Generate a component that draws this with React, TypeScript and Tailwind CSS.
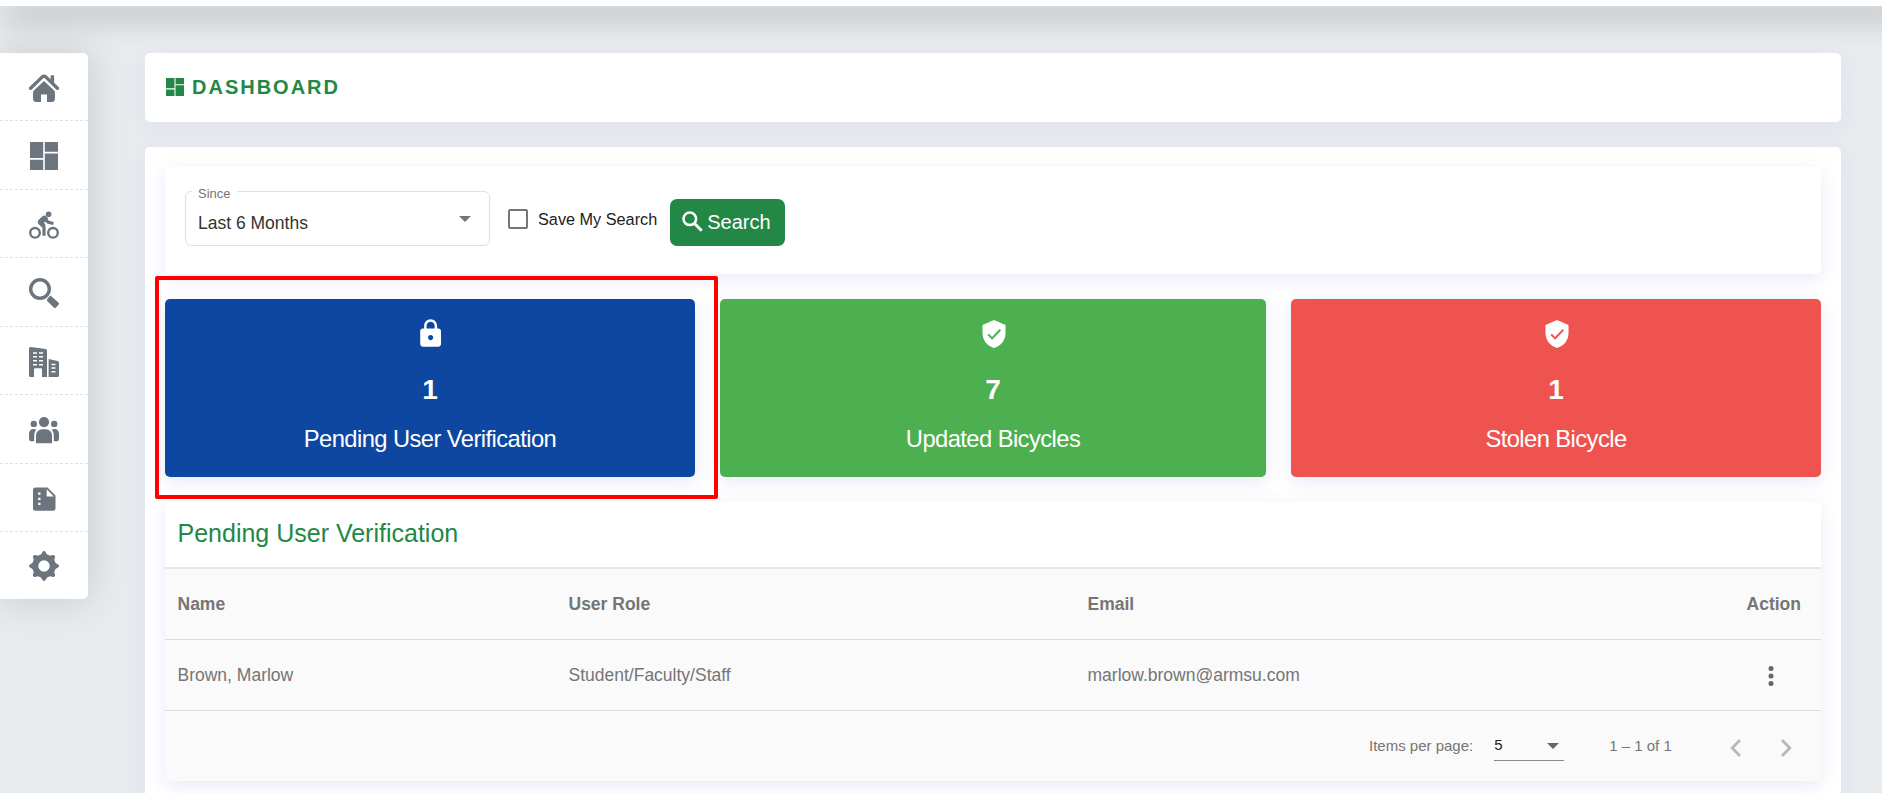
import React from "react";
import { MdLock } from "react-icons/md";

const iconBox = "h-[30px] w-[30px]";

const Home = () => (
  <svg viewBox="0 0 30 30" className={iconBox} fill="currentColor">
    <path d="M21.6 8V3.2c0-.6.4-1 1-1h1.500c.6 0 1 .4 1 1v8z" />
    <path d="M1.600 15.300 13 4.100c1.200-1.100 2.800-1.100 4 0l11.400 11.200" fill="none" stroke="currentColor" strokeWidth="3.300" strokeLinecap="round" />
    <path d="M15 8 25.900 18.200V26a3 3 0 0 1-3 3H18v-7.500h-6V29H7.100a3 3 0 0 1-3-3v-7.800z" />
  </svg>
);
const Dash = ({ className }: { className: string }) => (
  <svg viewBox="0 0 28 28" className={className} fill="currentColor">
    <path d="M0 0h13.200v16H0zM14.800 0H28v9.700H14.800zM0 17.800h13.200V28H0zM14.800 11.400H28V28H14.800z" />
  </svg>
);
const Biker = () => (
  <svg viewBox="0 0 30 30" className={iconBox} fill="currentColor">
    <circle cx="19.600" cy="4.200" r="2.800" />
    <circle cx="6" cy="22.800" r="4.800" fill="none" stroke="currentColor" strokeWidth="2.400" />
    <circle cx="24" cy="22.800" r="4.800" fill="none" stroke="currentColor" strokeWidth="2.400" />
    <path d="m15.500 8.800 3.800 3.400 5.200 1.300M10.800 12.600l4.200 4.600v8.600" fill="none" stroke="currentColor" strokeWidth="3.200" strokeLinejoin="round" />
    <path d="M9 13.400c-.6-1.500-.1-2.800 1-3.800l3.600-3.300c1.300-1 2.700-1 3.700.1l2 2.200-4.300 4 1.700 2.800-3.700 1.500z" />
  </svg>
);
const Search = () => (
  <svg viewBox="0 0 30 30" className={iconBox} fill="currentColor">
    <circle cx="11" cy="11" r="9.300" fill="none" stroke="currentColor" strokeWidth="3.400" />
    <path d="m22.300 18.200 7 6.200c.9.800.9 1.600.2 2.400l-2.200 2.500c-.8.800-1.700.8-2.500.1l-6.400-6.200c-.7-.7-.7-1.600 0-2.300l1.900-2.400c.6-.8 1.300-.8 2-.3z" />
  </svg>
);
const Building = () => (
  <svg viewBox="0 0 30 30" className={iconBox} fill="currentColor" fillRule="evenodd">
    <path d="M0 1.500C0 .6.8-.1 1.800 0L16.500 2.100c.9.1 1.500.8 1.500 1.600V30h-5v-7.500c0-.8-.5-1.300-1.300-1.300H6.300c-.8 0-1.300.5-1.300 1.300V30H1.500C.7 30 0 29.400 0 28.500zM4 5.200v1.600h4V5.200zm6 0v1.600h4V5.200zM4 9v1.600h4V9zm6 0v1.600h4V9zM4 13v1.600h4V13zm6 0v1.600h4V13zM4 17v1.600h4V17zm6 0v1.600h4V17z" />
    <path d="M19.600 12 28.500 14c.9.2 1.500.8 1.500 1.700V28.500c0 .9-.7 1.500-1.500 1.500h-8.900zm2.900 4.800v1.500h4v-1.500zm0 3.500v1.500h4v-1.500zm0 3.700v1.500h4V24z" />
  </svg>
);
const People = () => (
  <svg viewBox="0 0 30 30" className={iconBox} fill="currentColor">
    <circle cx="15" cy="7.100" r="5.100" />
    <circle cx="4.800" cy="8.900" r="3.200" />
    <circle cx="25.200" cy="8.900" r="3.200" />
    <path d="M7 28.200V20.500a6.200 6.200 0 0 1 6.200-6.200h3.600a6.200 6.200 0 0 1 6.200 6.200v7.700zM0 24.300V18.800c0-2.700 2-4.700 4.600-4.700 1 0 1.900.2 2.700.6-1.400 1.500-2.100 3.300-2.100 5.500v6.100H2a2 2 0 0 1-2-2zM30 24.300V18.800c0-2.700-2-4.700-4.600-4.700-1 0-1.900.2-2.700.6 1.400 1.500 2.100 3.300 2.100 5.500v6.100H28a2 2 0 0 0 2-2z" />
  </svg>
);
const Doc = () => (
  <svg viewBox="0 0 30 30" className={iconBox} fill="currentColor" fillRule="evenodd">
    <path d="M6.500 3.500H18.500l8 8v12.800a2.500 2.500 0 0 1-2.500 2.500H6.500A2.500 2.500 0 0 1 4 24.300V6a2.500 2.500 0 0 1 2.500-2.500zM17.700 5.300V12.500h7.200zM9.200 8.500v2.300h2.300V8.500zm0 5.200V16h2.300v-2.300zm0 5v2.300h2.300v-2.300z" />
  </svg>
);
const Gear = () => (
  <svg viewBox="0 0 30 30" className={iconBox} fill="none">
    <circle cx="15" cy="15" r="8.700" stroke="currentColor" strokeWidth="6" />
    {[0, 45, 90, 135, 180, 225, 270, 315].map((a) => (
      <path key={a} transform={`rotate(${a} 15 15)`} d="M9.800 4.800C12 4 12.600 2.800 13.300 1.200c.6-1.500 2.800-1.500 3.400 0 .7 1.600 1.300 2.800 3.500 3.600z" fill="currentColor" />
    ))}
  </svg>
);
const Shield = () => (
  <svg viewBox="0 0 24 28" className="mt-[1.500px] mb-[1.750px] h-7 w-6" fill="none">
    <path d="M12 0 23.500 5v8c0 7-4.500 13-11.500 15C5 26 .5 20 .5 13V5z" fill="currentColor" />
    <path d="m6.200 14.400 3.900 4 8.200-8.600" className="stroke-(--mark)" strokeWidth="2" />
  </svg>
);

const nav = [
  <Home />,
  <Dash className="mb-[2px] h-7 w-7" />,
  <Biker />,
  <Search />,
  <Building />,
  <People />,
  <Doc />,
  <Gear />,
];

const cardShadow = "shadow-[0_5px_18px_rgba(82,63,205,0.12)]";

const stats = [
  { icon: <MdLock />, n: 1, label: "Pending User Verification", color: "bg-[#0d47a1]" },
  { icon: <Shield />, n: 7, label: "Updated Bicycles", color: "bg-[#4caf50] [--mark:#4caf50]" },
  { icon: <Shield />, n: 1, label: "Stolen Bicycle", color: "bg-[#ef5350] [--mark:#ef5350]" },
];

const cols = "grid grid-cols-[391px_519px_1fr_auto] items-center pl-[12.500px] pr-5";

export default function App() {
  return (
    <div className="relative h-[793px] overflow-hidden bg-[#e7ebee] font-['Liberation_Sans',Arial,sans-serif]">
      <header className="relative h-[6px] bg-white shadow-[12px_10px_25px_8px_rgba(0,0,0,0.14)]" />
      <div className="flex items-start pt-[47px]">
        <nav className="relative h-[546px] w-[88px] shrink-0 rounded-r-[5px] bg-white text-[#6c757d] shadow-[0_0_38px_rgba(0,0,0,0.15)]">
          {nav.map((icon, i) => (
            <a key={i} className="flex h-[68.430px] items-center justify-center border-b border-dashed border-[#dee2e6] pt-[3px] last:border-0 last:pt-0">
              {icon}
            </a>
          ))}
        </nav>
        <main className="ml-[57px] flex w-[1696px] flex-col gap-[25px]">
          <section className="flex h-[69px] items-center gap-[8px] rounded-[5px] bg-white pb-[2px] pl-[21px] text-[#238745] shadow-[0_5px_18px_rgba(82,63,255,0.05)]">
            <Dash className="h-[18px] w-[18px]" />
            <h1 className="text-[20px] font-bold tracking-[2px]">DASHBOARD</h1>
          </section>
          <section className="h-[700px] rounded-[5px] bg-white p-5 shadow-[0_5px_18px_rgba(82,63,255,0.05)]">
            <div className={`flex h-[107px] rounded-[5px] bg-white pl-5 pt-6 ${cardShadow}`}>
              <div className="relative flex h-[55px] w-[305px] items-center justify-between rounded-[6px] border border-[#e0e0e0] pl-3 pr-[18px]">
                <span className="absolute left-[6px] top-[-6px] bg-white px-[6px] text-[13px] leading-[16px] text-[#757575]">Since</span>
                <span className="pt-[8px] text-[17.500px] leading-5 text-[#333]">Last 6 Months</span>
                <span className="border-x-[6px] border-t-[6px] border-x-transparent border-t-[#757575]" />
              </div>
              <label className="ml-[18px] mt-[17px] flex h-[22px] items-center gap-[10px] text-[16.250px] text-[#212121]">
                <span className="h-5 w-5 rounded-[2px] border-[2.500px] border-[#757575]" />
                Save My Search
              </label>
              <button className="ml-[13px] mt-2 flex h-[47px] w-[115px] items-center gap-[4px] rounded-[7px] bg-[#238745] pb-[2px] pl-3 text-[20px] text-white">
                <svg viewBox="0 0 21 21" className="h-[21px] w-[21px]" fill="none" stroke="currentColor">
                  <circle cx="7.800" cy="7.800" r="6.300" strokeWidth="2.500" />
                  <path d="m12.300 12.300 7.400 7.400" strokeWidth="3" />
                </svg>
                Search
              </button>
            </div>
            <div className="relative mt-[25px] grid grid-cols-[530px_546px_530px] gap-[25px]">
              {stats.map((s) => (
                <div key={s.label} className={`flex h-[178px] flex-col items-center rounded-[5px] text-white ${s.color} ${cardShadow}`}>
                  <span className="mt-[19px] pl-px text-[31.250px]">{s.icon}</span>
                  <span className="mt-[25px] text-[28px] font-bold leading-8">{s.n}</span>
                  <span className="mt-[19px] text-[23.750px] leading-7 tracking-[-0.570px]">{s.label}</span>
                </div>
              ))}
              <div className="absolute -left-[10px] -top-[23.500px] h-[223.500px] w-[563px] rounded-[2px] border-4 border-[#ff0000]" />
            </div>
            <div className={`mt-[25px] overflow-hidden rounded-[5px] bg-[#fafafa] text-[17.500px] text-[#757575] ${cardShadow}`}>
              <h2 className="flex h-[67px] items-center border-b-2 border-[#e7e7e7] bg-white pb-[2px] pl-[12.500px] text-[25px] text-[#238745]">Pending User Verification</h2>
              <div className={`h-[71px] border-b border-[#dcdcdc] font-bold ${cols}`}>
                <span>Name</span>
                <span>User Role</span>
                <span>Email</span>
                <span>Action</span>
              </div>
              <div className={`h-[71px] border-b border-[#dcdcdc] ${cols}`}>
                <span>Brown, Marlow</span>
                <span>Student/Faculty/Staff</span>
                <span>marlow.brown@armsu.com</span>
                <svg viewBox="0 0 6 20" className="mr-[27px] mt-[2px] h-5 w-[6px]" fill="#666">
                  <circle cx="3" cy="2.500" r="2.500" />
                  <circle cx="3" cy="10" r="2.500" />
                  <circle cx="3" cy="17.500" r="2.500" />
                </svg>
              </div>
              <div className="flex h-[70px] items-center pl-[1204px] text-[15px]">
                <span>Items per page:</span>
                <span className="relative top-[-0.500px] ml-[21px] flex h-[30px] w-[70px] items-center justify-between border-b border-[#8a8a8a] pr-[5px] pt-px text-[#212121]">
                  5
                  <span className="border-x-[6.500px] border-t-[6.500px] border-x-transparent border-t-[#666]" />
                </span>
                <span className="ml-[45px]">1 – 1 of 1</span>
                <svg viewBox="0 0 62 18" className="ml-[58px] mt-[3px] h-[18px] w-[62px]" fill="none" stroke="#b8b8b8" strokeWidth="2.800">
                  <path d="M10 1 2.200 9l7.800 8M52 1l7.800 8-7.800 8" />
                </svg>
              </div>
            </div>
          </section>
        </main>
      </div>
    </div>
  );
}
